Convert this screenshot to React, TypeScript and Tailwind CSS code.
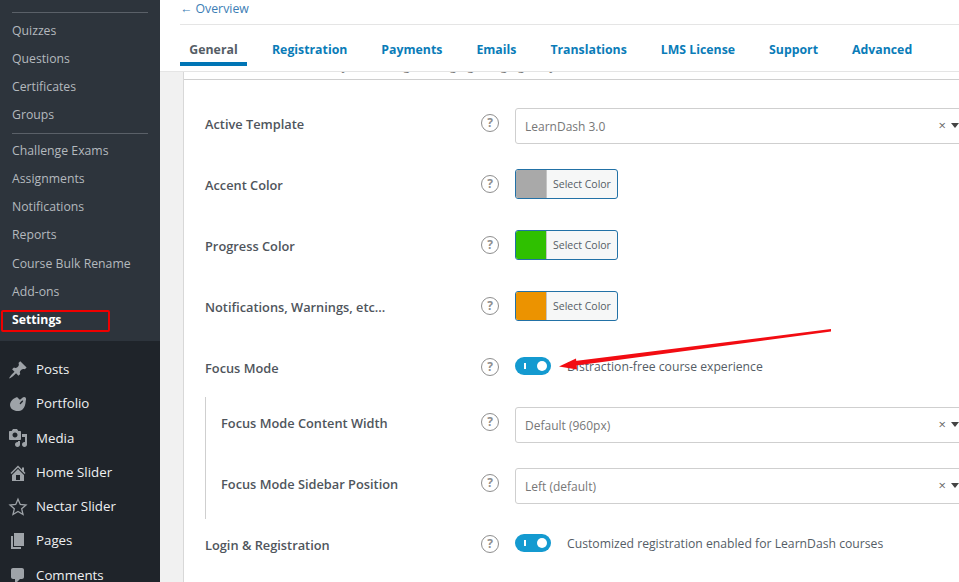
import { ReactNode } from 'react'

const FONT = "font-['Open_Sans','Liberation_Sans',sans-serif]"

const SUBMENU_TOP = ['Quizzes', 'Questions', 'Certificates', 'Groups']
const SUBMENU_BOTTOM = ['Challenge Exams', 'Assignments', 'Notifications', 'Reports', 'Course Bulk Rename', 'Add-ons']
const TABS = ['Registration', 'Payments', 'Emails', 'Translations', 'LMS License', 'Support', 'Advanced']

const MENU_ICONS: Record<string, ReactNode> = {
  Posts: <path d="M10.44 3.02l1.82-1.82 6.36 6.35-1.83 1.82c-1.05-.68-2.48-.57-3.41.36l-.75.75c-.92.93-1.04 2.35-.35 3.41l-1.83 1.82-2.41-2.41-2.8 2.79c-.42.42-3.38 2.71-3.8 2.29s1.86-3.39 2.28-3.81l2.79-2.79L4.1 9.36l1.83-1.82c1.05.69 2.48.57 3.4-.36l.75-.75c.93-.92 1.05-2.35.36-3.41z" />,
  Portfolio: <path fillRule="evenodd" d="M8 3.500c2-.8 2.500 1.500 3.500 2 1.500.7 2.500-2.500 4.500-2.500 2 0 2.500 2 1.800 3.500-.3 4-1 7-3.300 9-2.500 2-6.500 2.200-9.500.2C1.500 13.800 1.500 9.800 3 7.500c1.200-1.900 3-3.300 5-4zM14.500 6.500c-1 .4-2.500 2-2.800 3-.2.7.5 1 1.100.5.900-.7 2.200-2.200 2.400-3 .1-.5-.2-.7-.7-.5z" />,
  Media: <path d="M13 11V4c0-.55-.45-1-1-1h-1.670L9 1H5L3.670 3H2c-.55 0-1 .45-1 1v7c0 .55.45 1 1 1h10c.55 0 1-.45 1-1zM7 4.500c1.380 0 2.500 1.120 2.500 2.500S8.380 9.500 7 9.500 4.500 8.380 4.500 7 5.620 4.500 7 4.500zM14 6h5v10.500c0 1.380-1.120 2.500-2.500 2.500S14 17.880 14 16.500s1.120-2.500 2.500-2.500c.17 0 .34.02.5.05V9h-3V6zm-4 8.050V13h2v3.500c0 1.380-1.120 2.500-2.500 2.500S7 17.880 7 16.500 8.120 14 9.500 14c.17 0 .34.02.5.05z" />,
  'Home Slider': <path d="M16 8.500l1.530 1.530-1.060 1.060L10 4.620l-6.470 6.470-1.060-1.060L10 2.500l4 4v-2h2v4zm-6-2.460l6 5.990V18H4v-5.970zM12 17v-5H8v5h4z" />,
  'Nectar Slider': <path fill="none" stroke="currentColor" strokeWidth="1.300" strokeLinejoin="miter" d="M10 2.200l2.300 5.300 5.700.5-4.300 3.800 1.300 5.700-5-3-5 3 1.300-5.700L2 8l5.700-.5z" />,
  Pages: <path d="M6 15V2h10v13H6zm-1 1h8v2H3V5h2v11z" />,
  Comments: <path d="M5 2h9c1.100 0 2 .9 2 2v7c0 1.100-.9 2-2 2h-2l-5 5v-5H5c-1.100 0-2-.9-2-2V4c0-1.100.9-2 2-2z" />,
}

function SubItem({ label, active }: { label: string; active?: boolean }) {
  return (
    <div className={`flex h-[28.2px] items-center pl-3 text-[12.25px] ${active ? 'font-bold text-white' : 'text-[#b4b9be]'}`}>
      {label}
    </div>
  )
}

function Sidebar() {
  return (
    <aside className="relative w-40 shrink-0 bg-[#1f242a]">
      <div className="-mt-[24px] bg-[#2d343c] pb-[7px]">
        <div className="mb-[8px]"><SubItem label="Topics" /></div>
        <div className="mx-3 mb-[3.5px] h-px bg-[#5a6068]" />
        {SUBMENU_TOP.map((item) => <SubItem key={item} label={item} />)}
        <div className="mx-3 mb-[2.5px] mt-[4px] h-px bg-[#5a6068]" />
        {SUBMENU_BOTTOM.map((item) => <SubItem key={item} label={item} />)}
        <SubItem label="Settings" active />
      </div>
      <div className="pt-[11.5px]">
        {Object.keys(MENU_ICONS).map((name) => (
          <div key={name} className="flex h-[34.3px] items-center text-[13.3px] text-[#eef0f1]">
            <svg viewBox="0 0 20 20" className="ml-[8px] h-[20px] w-[20px] fill-current text-[#9ea3a8]">
              {MENU_ICONS[name]}
            </svg>
            <span className="ml-[8px]">{name}</span>
          </div>
        ))}
      </div>
      {/* annotation round the Settings item */}
      <div className="absolute left-[1px] top-[310px] h-[22px] w-[109px] rounded-[2px] border-[2px] border-[#f00000]" />
    </aside>
  )
}

function HelpIcon({ low }: { low?: boolean }) {
  return (
    <span className={`flex h-[18px] w-[18px] shrink-0 items-center justify-center rounded-full border-[1.75px] border-[#8e8e8e] text-[12px] font-bold leading-none text-[#8e8e8e] ${low ? 'translate-y-[1px]' : ''}`}>
      ?
    </span>
  )
}

function SelectBox({ value }: { value: string }) {
  return (
    <div className="flex h-[36px] min-w-0 flex-1 items-center rounded-[3px] border border-[#cfcfcf] bg-white pl-[9px] pr-[3px] text-[12px] text-[#777]">
      <span className="flex-1 pt-[2px]">{value}</span>
      <span className="mr-[5px] text-[13px] leading-none text-[#666]">×</span>
      <span className="h-0 w-0 border-x-[4px] border-t-[5px] border-x-transparent border-t-[#444]" />
    </div>
  )
}

function ColorPicker({ swatch }: { swatch: string }) {
  return (
    <div className="flex h-[30px] w-[103px] overflow-hidden rounded-[3px] border border-[#2271a6] bg-[#f6f7f7]">
      <span className={`w-[31px] border-r border-[#c4c4c4] ${swatch}`} />
      <span className="flex-1 pl-[6px] text-[10.5px] leading-[28px] text-[#555d66]">Select Color</span>
    </div>
  )
}

function Toggle() {
  return (
    <span className="relative block h-[18px] w-[36px] shrink-0 rounded-full bg-[#149ad0]">
      <span className="absolute left-[9px] top-[6px] h-[6px] w-[2px] bg-white" />
      <span className="absolute right-[4px] top-[4px] h-[10px] w-[10px] rounded-full bg-white" />
    </span>
  )
}

function Row({ label, children }: { label: string; children: ReactNode }) {
  return (
    <div className="flex h-[61px] items-center">
      <div className="min-w-0 flex-1 text-[12.8px] font-semibold text-[#4f555c]">{label}</div>
      <div className="flex w-[482px] shrink-0 items-center gap-[16px] pb-[4px]">{children}</div>
    </div>
  )
}

function SubRow({ label, value }: { label: string; value: string }) {
  return (
    <div className="flex h-[61px] items-center pb-[8px]">
      <div className="min-w-0 flex-1 text-[12.8px] font-semibold text-[#4f555c]">{label}</div>
      <div className="flex w-[482px] shrink-0 items-center gap-[16px] pb-[4px]">
        <HelpIcon />
        <div className="flex flex-1 translate-y-[3px]"><SelectBox value={value} /></div>
      </div>
    </div>
  )
}

export default function App() {
  return (
    <div className={`relative flex h-[582px] w-[959px] overflow-hidden bg-[#f1f1f1] ${FONT}`}>
      <Sidebar />
      <main className="min-w-0 flex-1">
        <header className="h-[72px] border-b border-[#e5e5e5] bg-white pl-5">
          <div className="h-[25px] border-b border-[#e5e5e5] text-[12.3px] leading-[17px] text-[#3c7db5]">← Overview</div>
          <nav className="flex h-[46px] items-start">
            <div className="mr-[25px] mt-[14px] h-[27px] w-[67px] border-b-[4px] border-[#0075b5] text-center text-[12.3px] font-bold leading-[22px] text-[#555d66]">General</div>
            <div className="mt-[14px] flex gap-[34px]">
              {TABS.map((tab) => (
                <span key={tab} className="text-[12.3px] font-bold leading-[22px] text-[#0a7cb8]">{tab}</span>
              ))}
            </div>
          </nav>
        </header>
        <section className="-mr-[4px] ml-[23px] h-[520px] border-l border-[#d8d8d8] bg-white">
          <div className="h-[8px] overflow-hidden border-b border-[#cfcfcf] pl-[21px]">
            <p className="-mt-[15px] text-[12.3px] leading-[17px] text-[#777]">Choose the theme, and your settings, changing design gallery</p>
          </div>
          <div className="pl-[21px] pt-[14px]">
            <Row label="Active Template">
              <HelpIcon />
              <div className="flex flex-1 translate-y-[3px]"><SelectBox value="LearnDash 3.0" /></div>
            </Row>
            {[['Accent Color', 'bg-[#a9a9a9]'], ['Progress Color', 'bg-[#2fc000]'], ['Notifications, Warnings, etc...', 'bg-[#ec9300]']].map(([label, swatch]) => (
              <Row key={label} label={label}>
                <HelpIcon /><ColorPicker swatch={swatch} />
              </Row>
            ))}
            <Row label="Focus Mode">
              <HelpIcon low /><Toggle />
              <span className="pt-[2px] text-[12.2px] text-[#555d66]">Distraction-free course experience</span>
            </Row>
            <div className="-mt-[2px] border-l border-[#cfcfcf] pl-[15px]">
              <SubRow label="Focus Mode Content Width" value="Default (960px)" />
              <SubRow label="Focus Mode Sidebar Position" value="Left (default)" />
            </div>
            <div className="-mt-[4px]">
              <Row label="Login & Registration">
                <HelpIcon low /><Toggle />
                <span className="pt-[2px] text-[12.2px] text-[#555d66]">Customized registration enabled for LearnDash courses</span>
              </Row>
            </div>
          </div>
        </section>
      </main>
      {/* annotation arrow pointing at the Focus Mode toggle */}
      <svg viewBox="0 0 959 582" className="pointer-events-none absolute inset-0 h-[582px] w-[959px]">
        <path d="M831 329 L831 331.500 L576 365.500 L575 361 Z" fill="#f20c12" />
        <path d="M559 366.500 L576 358.500 L577 369.500 Z" fill="#f20c12" />
      </svg>
    </div>
  )
}
